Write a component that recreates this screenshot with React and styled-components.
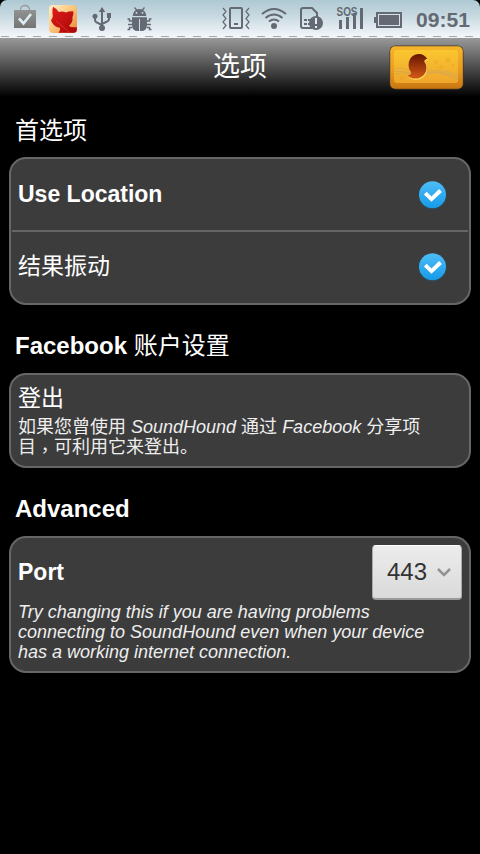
import React from 'react'
import styled, { createGlobalStyle } from 'styled-components'

const GlobalStyle = createGlobalStyle`
  * {
    box-sizing: border-box;
  }
  body {
    margin: 0;
    background: #000;
    color: #fff;
    font-family: 'Liberation Sans', 'Noto Sans CJK SC', sans-serif;
  }
`

const Screen = styled.div`
  width: 480px;
  height: 854px;
  overflow: hidden;
  background: #000;
`

const StatusBar = styled.div`
  height: 38px;
  border-radius: 7px 7px 0 0;
  background:
    repeating-linear-gradient(90deg, #a5a9ac 0 8px, transparent 8px 16px) 1px
      36px / 100% 1px no-repeat,
    linear-gradient(#aec9d3, #c6d8e0 40%, #f0f4f8 92%);
`

const StatusIcons = styled.svg`
  display: block;
`

const Clock = styled.text`
  font: bold 21px 'Liberation Sans', sans-serif;
  fill: #646973;
`

const Header = styled.header`
  height: 60px;
  display: grid;
  grid-template-columns: 90px 1fr 90px;
  align-items: start;
  background: linear-gradient(#999, #000 98%);
`

const Title = styled.h1`
  grid-column: 2;
  margin: 9px 0 0;
  text-align: center;
  font-size: 27px;
  line-height: 40px;
  font-weight: 400;
`

const LogoButton = styled.button`
  width: 75px;
  height: 45px;
  margin-top: 7px;
  margin-left: -1px;
  padding: 0;
  border: 0;
  background: none;
`

const Section = styled.section`
  padding: 0 9px;
  margin-top: ${(props) => props.$gap}px;
`

const SectionTitle = styled.h2`
  height: 40px;
  margin: 0 0 ${(props) => props.$space || 7}px;
  padding-left: 6px;
  font-size: 24px;
  line-height: 40px;
  white-space: nowrap;
`

const Han = styled.span`
  font-weight: 400;
`

const Comma = styled.span`
  font-family: 'Noto Sans CJK TC', sans-serif;
  line-height: 0;
  vertical-align: -4px;
`

const Card = styled.div`
  height: ${(props) => props.$height}px;
  border: 2px solid #666;
  border-radius: 17px;
  background: #3c3c3c;
  overflow: hidden;
`

const ToggleRow = styled.div`
  height: ${(props) => props.$height || 71}px;
  display: flex;
  align-items: center;
  justify-content: space-between;
  padding: 0 20px 0 7px;
`

const Divider = styled.div`
  height: 2px;
  margin: 0 1px;
  background: #666;
`

const Label = styled.div`
  padding-bottom: 2px;
  font-size: 23px;
  line-height: 32px;
  font-weight: bold;
`

const CardContent = styled.div`
  padding: 7px 7px 0;
`

const Description = styled.p`
  margin: ${(props) => props.$top || 0}px 0 0;
  font-size: 18px;
  line-height: 20px;
  color: #eee;
  white-space: nowrap;
`

const PortRow = styled.div`
  display: flex;
  align-items: center;
  justify-content: space-between;
`

const Select = styled.button`
  width: 90px;
  height: 55px;
  display: flex;
  align-items: center;
  justify-content: space-between;
  padding: 0 9px 0 14px;
  border: 1px solid #aaa;
  border-top-color: #fff;
  border-bottom: 2px solid #999;
  border-radius: 4px;
  background: linear-gradient(#ececec, #dadada);
  color: #333;
  font: 24px 'Liberation Sans', sans-serif;
`

const Check = () => (
  <svg width="32" height="32" viewBox="0 0 32 32">
    <defs>
      <linearGradient id="check" x1="0" y1="0" x2="0" y2="1">
        <stop offset="0" stopColor="#4dbdf7" />
        <stop offset="1" stopColor="#159be8" />
      </linearGradient>
    </defs>
    <circle cx="15.5" cy="16.5" r="14.2" fill="#236b9b" opacity="0.18" />
    <circle cx="15.5" cy="15.8" r="13.5" fill="url(#check)" />
    <path
      d="M8.3 14.1l6.2 6 9-8.6"
      fill="none"
      stroke="#fff"
      strokeWidth="4"
    />
  </svg>
)

const Logo = () => (
  <svg width="75" height="45" viewBox="0 0 75 45">
    <defs>
      <linearGradient id="rim" x1="0" y1="0" x2="0" y2="1">
        <stop offset="0" stopColor="#f6b62b" />
        <stop offset="0.55" stopColor="#e99d20" />
        <stop offset="1" stopColor="#c87612" />
      </linearGradient>
      <linearGradient id="face" x1="0" y1="0" x2="0" y2="1">
        <stop offset="0" stopColor="#fac62f" />
        <stop offset="1" stopColor="#efa62c" />
      </linearGradient>
      <linearGradient id="swirl" x1="0" y1="0" x2="0" y2="1">
        <stop offset="0" stopColor="#651500" />
        <stop offset="1" stopColor="#d35a17" />
      </linearGradient>
    </defs>
    <rect x="0.5" y="0.5" width="74" height="44" rx="6" fill="#493620" />
    <rect x="1.2" y="1.2" width="72.6" height="42.6" rx="5" fill="url(#rim)" />
    <rect x="5" y="5" width="64" height="33" rx="3" fill="url(#face)" />
    <g fill="#e08a24" opacity="0.2">
      <circle cx="47" cy="17" r="2" />
      <circle cx="59" cy="15" r="2.5" />
      <circle cx="52" cy="22" r="2" />
      <circle cx="64" cy="20" r="1.5" />
      <circle cx="13" cy="33" r="2" />
    </g>
    <g fill="none" stroke="#c5a36b" opacity="0.5">
      <path d="M5 24q9-2 15 1t20 1 29 4" />
      <path d="M5 26.5q9-1 15 1t20 0 29 5" />
      <path d="M5 29q12-2 20 0t16-1 28 7" />
    </g>
    <path
      d="M38.3 13.7C36.4 14.3 35 15.4 35.4 16.8C36.7 18.6 37.6 20.8 37.4 23.7C37 29.8 32 34 26.4 34C23.2 34 20.3 32.8 18.8 30.4C20.8 30.1 22.7 29 22 27.2C20.4 25.2 19.5 22.8 19.6 19.6C19.8 13.6 24.1 9 30 9C33.6 9 36 11 38.3 13.7Z"
      fill="#ffe060"
      transform="translate(0.6 0.8)"
    />
    <path
      d="M38.3 13.7C36.4 14.3 35 15.4 35.4 16.8C36.7 18.6 37.6 20.8 37.4 23.7C37 29.8 32 33.5 26.4 33.5C23.2 33.5 20.3 32.3 18.8 30.4C20.8 30.1 22.7 29 22 27.2C20.4 25.2 19.5 22.8 19.6 19.6C19.8 13.6 24.1 9 30 9C33.6 9 36 11 38.3 13.7Z"
      fill="url(#swirl)"
    />
  </svg>
)

// x, y, height
const bars = [
  [339, 20, 9],
  [346, 17, 12],
  [353, 13, 16],
  [360, 8, 21],
]

const DeviceStatus = () => (
  <StatusIcons width="480" height="38" viewBox="0 0 480 38">
    <defs>
      <linearGradient id="bag" x1="0" y1="0" x2="0" y2="1">
        <stop offset="0" stopColor="#929292" />
        <stop offset="1" stopColor="#747474" />
      </linearGradient>
      <linearGradient id="tile" x1="0" y1="0" x2="1" y2="1">
        <stop offset="0" stopColor="#fff0ca" />
        <stop offset="0.45" stopColor="#fcc980" />
        <stop offset="1" stopColor="#ee8131" />
      </linearGradient>
      <linearGradient id="cat" x1="0" y1="0" x2="1" y2="1">
        <stop offset="0" stopColor="#e11c1b" />
        <stop offset="1" stopColor="#a90708" />
      </linearGradient>
    </defs>

    {/* market bag */}
    <path
      d="M20.5 11V9.5a4.5 4 0 0 1 9 0V11"
      fill="none"
      stroke="#999"
      strokeWidth="1.3"
    />
    <rect x="14" y="10" width="22" height="18" fill="url(#bag)" />
    <path
      d="M19 18.5l4.5 5L31 14"
      fill="none"
      stroke="#dcecf3"
      strokeWidth="2.7"
    />

    {/* app tile */}
    <rect x="49" y="5" width="28" height="28" rx="4" fill="url(#tile)" />
    <path
      d="M53 6.8Q56.5 8.5 58.7 12Q62 11 66 12.4Q69 11 73.3 11.2Q74 14.5 72.4 17.5Q73.3 22 69 25.8Q70.5 27.8 76.8 27.2V30Q76.5 32.7 74 32.7H58.5Q61 30.3 60 27.7Q55 27 53 24Q51.5 22.5 51 20Q53.5 17.5 52.5 14Q52 10 53 6.8Z"
      fill="url(#cat)"
    />
    <path d="M56 21l13 11" stroke="#dc4c35" strokeWidth="0.6" />

    {/* usb */}
    <path
      d="M102 10v17M95 17v3q0 2 3 3l4 2M109 17v2q0 2-3 3l-4 2"
      fill="none"
      stroke="#646973"
      strokeWidth="2"
    />
    <path d="M102 7l-3.3 5h6.6zM107 13h4v5h-4z" fill="#646973" />
    <circle cx="95" cy="16.3" r="2.5" fill="#646973" />
    <circle cx="102" cy="28" r="3" fill="#646973" />

    {/* debug bug */}
    <path d="M132.7 16a6.8 7 0 0 1 13.6 0z" fill="#646973" />
    <path
      d="M134.5 7.5l2.5 3M144.5 7.5l-2.5 3"
      stroke="#646973"
      strokeWidth="1.3"
    />
    <path
      d="M132 21h-2.5v-2h-2M132 24.5h-4M132 27.5h-2.5v2h-2M147 21h2.5v-2h2M147 24.5h4M147 27.5h2.5v2h2"
      fill="none"
      stroke="#646973"
      strokeWidth="1.4"
    />
    <path
      d="M132 17.3h15v7.7q0 6-6 6h-3q-6 0-6-6z"
      fill="#646973"
    />
    <path d="M139.5 19v12" stroke="#cbdde5" strokeWidth="1" />
    <circle cx="136.5" cy="12.8" r="0.9" fill="#dbe7ed" />
    <circle cx="142.5" cy="12.8" r="0.9" fill="#dbe7ed" />

    {/* vibrate */}
    <rect
      x="230"
      y="8"
      width="12"
      height="20"
      rx="1"
      fill="none"
      stroke="#646973"
      strokeWidth="2"
    />
    <path d="M234 24h4" stroke="#646973" strokeWidth="2" />
    <path
      d="M223 8l3 3.5-3 3.5 3 3.5-3 3.5 3 3.5-3 3.5M249 8l-3 3.5 3 3.5-3 3.5 3 3.5-3 3.5 3 3.5"
      fill="none"
      stroke="#646973"
      strokeWidth="1.2"
    />

    {/* wifi */}
    <g fill="none" stroke="#646973" strokeWidth="2">
      <path d="M262 14q12-10 24 0" />
      <path d="M265.5 18q8.5-7 17 0" />
      <path d="M269 21.5q5-4 10 0" />
    </g>
    <circle cx="274" cy="26" r="3" fill="#646973" />

    {/* sim alert */}
    <path
      d="M312 28h-9q-2 0-2-2V10q0-2 2-2h9l5 5v5"
      fill="none"
      stroke="#646973"
      strokeWidth="2"
    />
    <path
      d="M304 20h3M308 20h3M304 24h3M308 24h3"
      stroke="#646973"
      strokeWidth="2"
    />
    <circle cx="316" cy="23" r="7" fill="#646973" />
    <path d="M316 18v6M316 26v2" stroke="#e2ebf0" strokeWidth="2" />

    {/* signal */}
    {bars.map(([x, y, height]) => (
      <rect key={x} x={x} y={y} width="3" height={height} fill="#646973" />
    ))}
    <text
      x="336.5"
      y="15.5"
      textLength="21"
      lengthAdjust="spacingAndGlyphs"
      fontFamily="Liberation Sans"
      fontSize="13.5"
      fontWeight="bold"
      fill="#646973"
    >
      SOS
    </text>

    {/* battery */}
    <rect
      x="377"
      y="13"
      width="24"
      height="14"
      fill="none"
      stroke="#646973"
      strokeWidth="2"
    />
    <rect x="374" y="17" width="2" height="6" fill="#646973" />
    <rect x="379" y="15" width="20" height="10" fill="#646973" />
    <path d="M378.5 14.5h21v11h-21z" fill="none" stroke="#d5e2e8" />
    <Clock x="416" y="27" textLength="54" lengthAdjust="spacingAndGlyphs">
      09:51
    </Clock>
  </StatusIcons>
)

const App = () => (
  <>
    <GlobalStyle />
    <Screen>
      <StatusBar>
        <DeviceStatus />
      </StatusBar>
      <Header>
        <Title>选项</Title>
        <LogoButton aria-label="SoundHound">
          <Logo />
        </LogoButton>
      </Header>

      <Section $gap={13}>
        <SectionTitle $space={6}>
          <Han>首选项</Han>
        </SectionTitle>
        <Card $height={148}>
          <ToggleRow>
            <Label>Use Location</Label>
            <Check />
          </ToggleRow>
          <Divider />
          <ToggleRow $height={69}>
            <Label>
              <Han>结果振动</Han>
            </Label>
            <Check />
          </ToggleRow>
        </Card>
      </Section>

      <Section $gap={21}>
        <SectionTitle>
          Facebook <Han>账户设置</Han>
        </SectionTitle>
        <Card $height={95}>
          <CardContent>
            <Label>
              <Han>登出</Han>
            </Label>
            <Description $top={1}>
              如果您曾使用 <i>SoundHound</i> 通过 <i>Facebook</i> 分享项
              <br />
              目<Comma>，</Comma>可利用它来登出。
            </Description>
          </CardContent>
        </Card>
      </Section>

      <Section $gap={21}>
        <SectionTitle>Advanced</SectionTitle>
        <Card $height={137}>
          <CardContent>
            <PortRow>
              <Label>Port</Label>
              <Select>
                443
                <svg width="16" height="12" viewBox="0 0 16 12">
                  <path
                    d="M2 3l6 6 6-6"
                    fill="none"
                    stroke="#929292"
                    strokeWidth="2.5"
                  />
                </svg>
              </Select>
            </PortRow>
            <Description $top={2}>
              <i>
                Try changing this if you are having problems
                <br />
                connecting to SoundHound even when your device
                <br />
                has a working internet connection.
              </i>
            </Description>
          </CardContent>
        </Card>
      </Section>
    </Screen>
  </>
)

export default App
